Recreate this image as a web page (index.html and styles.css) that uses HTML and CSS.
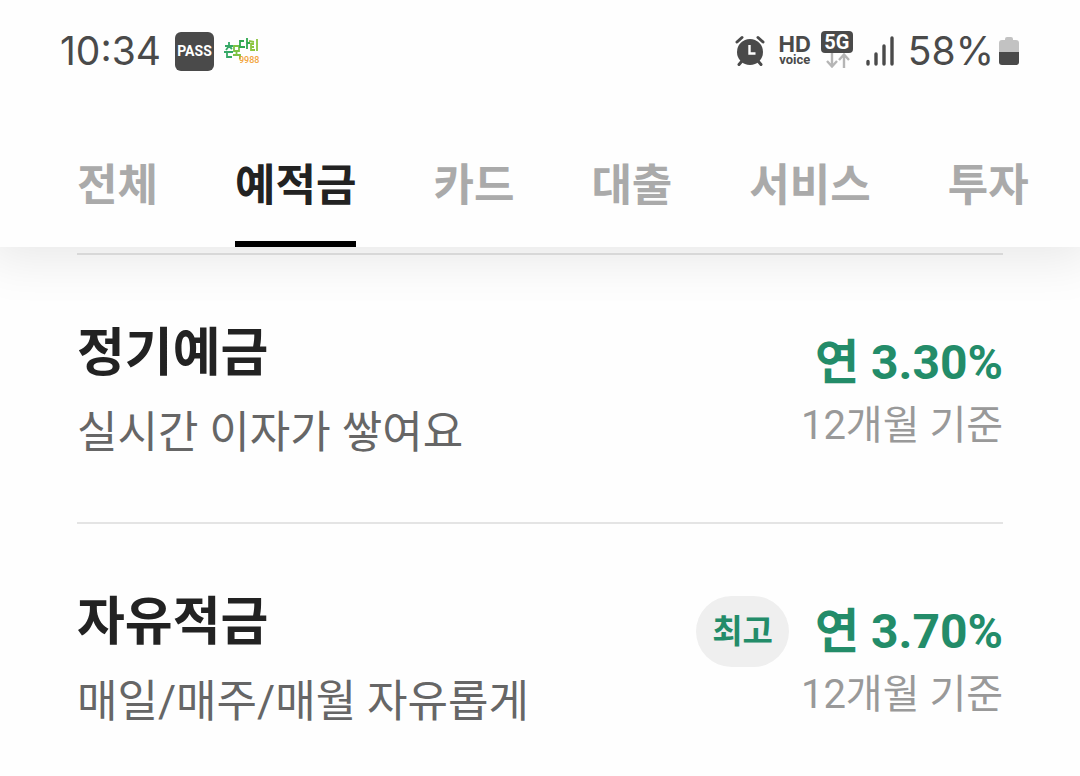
FILE: index.html
```html
<!DOCTYPE html>
<html lang="ko">
<head>
<meta charset="utf-8">
<meta name="viewport" content="width=device-width, initial-scale=1">
<title>예적금</title>
<link rel="stylesheet" href="styles.css">
</head>
<body>
<header class="header">
  <div class="status">
    <div class="status-left">
      <span class="clock">10:34</span>
      <span class="pass">PASS</span>
      <svg class="health" viewBox="0 0 36 26" role="img" aria-label="손목닥터9988">
        <g fill="none" stroke-width="1.800">
          <path stroke="#35a866" d="M5 4v3M1 8h8M5 8l-3 4M5 8l3 3M0 14h9M3 14v5h5"/>
          <path stroke="#7cc243" d="M10 8v5h5V8zM12.500 14v3M9 17h7v4"/>
          <path stroke="#2fa84f" d="M20 3h-4v6h5M23 0v11M23 5h3"/>
          <path stroke="#8cc63f" d="M25 3l5 1M33 1v12M30 6h-3v6h4M27 9h3"/>
        </g>
        <text class="health-num" x="15" y="25">9988</text>
      </svg>
    </div>
    <div class="status-right">
      <svg class="alarm" viewBox="0 0 30 32" aria-hidden="true">
        <g fill="none" stroke="#4a4a4a" stroke-width="3" stroke-linecap="round">
          <path d="M2 7l5-4.500M28 7l-5-4.500M7 26l-3 3.500M23 26l3 3.500"/>
        </g>
        <circle cx="15" cy="17" r="13" fill="#4a4a4a"/>
        <path d="M14.500 10v8.500h6" fill="none" stroke="#fff" stroke-width="2.400"/>
      </svg>
      <span class="hd"><b class="hd-top">HD</b><b class="hd-sub">voice</b></span>
      <span class="net"><b class="net-badge">5G</b>
        <svg class="arrows" viewBox="0 0 26 15" aria-hidden="true">
          <path d="M8 0v13M3 8l5 5.500L13 8M20 15V2M15 7l5-5.500L25 7" fill="none" stroke="#b5b5b5" stroke-width="2.400"/>
        </svg>
      </span>
      <svg class="signal" viewBox="0 0 28 30" aria-hidden="true">
        <path d="M2 25.500v2.500M10 18v10M18 10v18M26 2v26" fill="none" stroke="#4a4a4a" stroke-width="3.400" stroke-linecap="round"/>
      </svg>
      <span class="percent">58%</span>
      <svg class="battery" viewBox="0 0 22 30" aria-hidden="true">
        <path d="M7 3q0-2 2-2h4q2 0 2 2v1h3q3 0 3 3v10H1V7q0-3 3-3h3z" fill="#c2c2c2"/>
        <path d="M1 16h20v10q0 3-3 3H4q-3 0-3-3z" fill="#4a4a4a"/>
      </svg>
    </div>
  </div>
  <nav class="tabs" aria-label="상품">
    <button class="tab">전체</button>
    <button class="tab tab-active" aria-current="true">예적금</button>
    <button class="tab">카드</button>
    <button class="tab">대출</button>
    <button class="tab">서비스</button>
    <button class="tab">투자</button>
  </nav>
</header>
<main class="list">
  <a class="item" href="#deposit">
    <div class="info">
      <h2 class="title">정기예금</h2>
      <p class="desc">실시간 이자가 쌓여요</p>
    </div>
    <div class="side">
      <div class="rate-line"><strong class="rate">연 3.30%</strong></div>
      <p class="term">12개월 기준</p>
    </div>
  </a>
  <a class="item" href="#savings">
    <div class="info">
      <h2 class="title">자유적금</h2>
      <p class="desc">매일/매주/매월 자유롭게</p>
    </div>
    <div class="side">
      <div class="rate-line"><span class="badge">최고</span><strong class="rate">연 3.70%</strong></div>
      <p class="term">12개월 기준</p>
    </div>
  </a>
</main>
</body>
</html>
```
FILE: styles.css
```css
* {
  box-sizing: border-box;
}

body {
  margin: 0;
  background: #fefefe;
  color: #222;
  font-family: Roboto, "Noto Sans CJK KR", sans-serif;
  overflow: hidden;
}

.header {
  position: relative;
  z-index: 1;
  background: #fefefe;
  box-shadow: 0 0 48px 12px rgba(0, 0, 0, 0.09);
}

.status {
  display: flex;
  justify-content: space-between;
  align-items: center;
  padding: 26px 60px 0 60px;
  height: 76px;
  color: #4a4a4a;
}

.status-left,
.status-right {
  display: flex;
  align-items: center;
}

.clock,
.percent {
  font-family: Inter, sans-serif;
  font-size: 39px;
  font-weight: 400;
  line-height: 48px;
}

.pass {
  width: 39px;
  height: 39px;
  margin-left: 14px;
  border-radius: 6px;
  background: #4a4a4a;
  color: #fff;
  font-size: 14px;
  font-weight: 700;
  line-height: 39px;
  text-align: center;
}

.health {
  width: 36px;
  height: 26px;
  margin-left: 10px;
}

.health-num {
  fill: #f2a33a;
  font-size: 9px;
  font-weight: 500;
}

.alarm {
  width: 30px;
  height: 32px;
  margin-right: 14px;
}

.hd {
  display: flex;
  flex-direction: column;
  align-items: center;
  margin-right: 10px;
}

.hd-top {
  font-family: Inter, sans-serif;
  font-size: 22px;
  line-height: 18px;
}

.hd-sub {
  font-size: 13px;
  line-height: 14px;
}

.net {
  display: flex;
  flex-direction: column;
  align-items: center;
  margin: 0 13px 4px 0;
}

.net-badge {
  width: 32px;
  height: 22px;
  border-radius: 4px;
  background: #4a4a4a;
  color: #fff;
  font-size: 20px;
  line-height: 23px;
  text-align: center;
}

.arrows {
  width: 26px;
  height: 15px;
}

.signal {
  width: 28px;
  height: 30px;
  margin-right: 14px;
}

.battery {
  width: 22px;
  height: 30px;
  margin-left: 4px;
}

.tabs {
  display: flex;
  gap: 77px;
  padding: 78px 50px 0 77px;
}

.tab {
  flex: none;
  height: 93px;
  padding: 0 0 30px;
  border: 0;
  border-bottom: 6px solid transparent;
  background: none;
  color: #aaa;
  font: 700 44px/57px "Noto Sans CJK KR", sans-serif;
}

.tab-active {
  border-color: #000;
  color: #222;
}

.list {
  padding: 6px 77px 0;
}

.item {
  display: flex;
  justify-content: space-between;
  align-items: flex-start;
  padding: 69px 0 63px;
  border-top: 2px solid #e4e4e4;
  color: inherit;
  text-decoration: none;
}

.title {
  margin: 0 0 23px;
  font-size: 52px;
  font-weight: 700;
  line-height: 60px;
}

.desc {
  margin: 0;
  color: #666;
  font-size: 44px;
  line-height: 52px;
}

.side {
  display: flex;
  flex-direction: column;
  align-items: flex-end;
  padding-top: 3px;
}

.rate-line {
  display: flex;
  align-items: center;
  gap: 26px;
  min-height: 71px;
}

.rate {
  color: #238c69;
  font-size: 48px;
  line-height: 56px;
}

.badge {
  padding: 0 16px;
  border-radius: 36px;
  background: #efefef;
  color: #238c69;
  font-size: 33px;
  font-weight: 700;
  line-height: 71px;
}

.term {
  margin: 4px 0 0;
  color: #999;
  font-size: 40px;
  line-height: 48px;
}
```
